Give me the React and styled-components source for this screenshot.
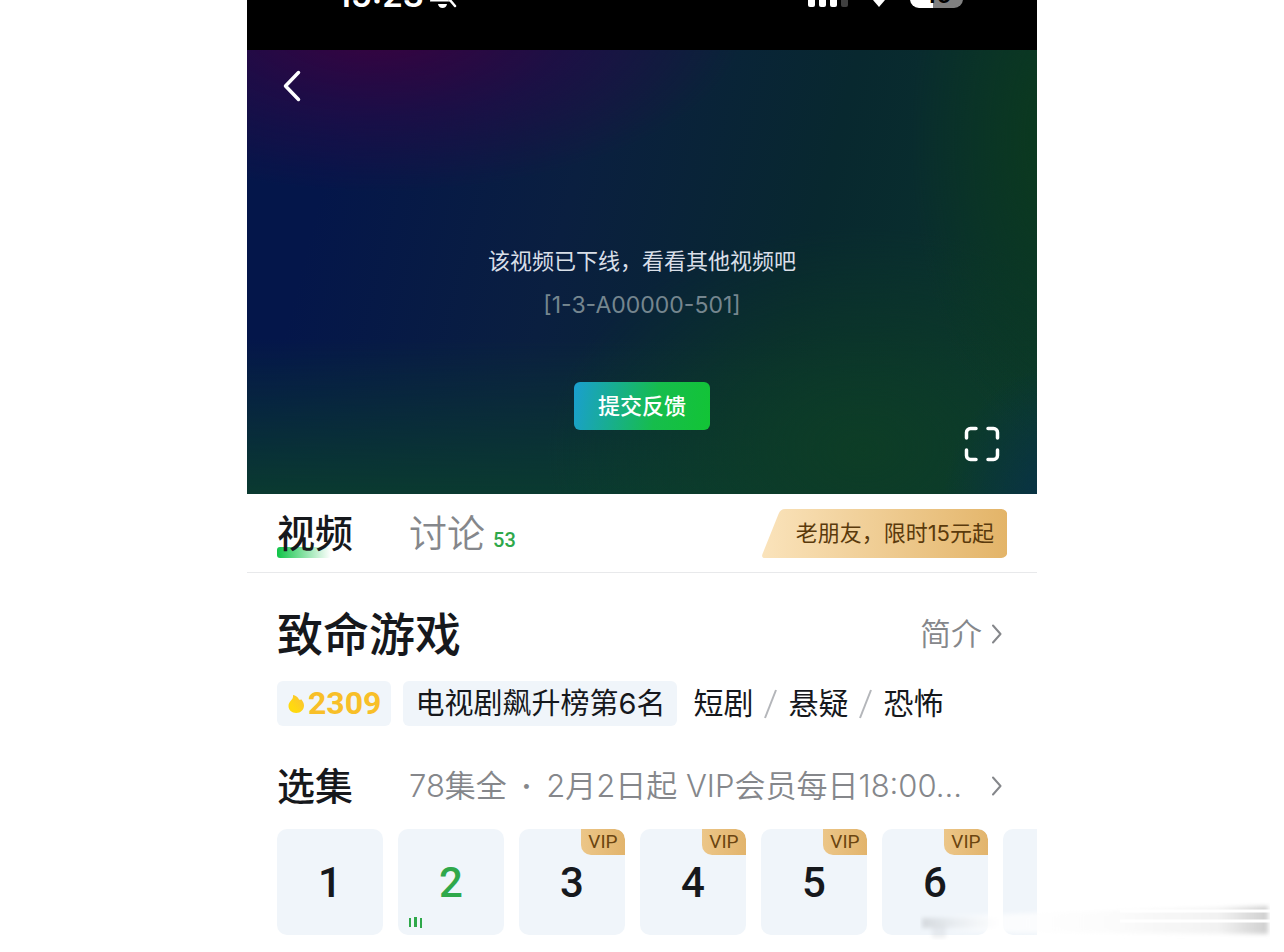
import { useState } from "react";
import styled, { createGlobalStyle } from "styled-components";

const GlobalStyle = createGlobalStyle`
    * {
        box-sizing: border-box;
    }

    body {
        margin: 0;
        background-color: #ffffff;
        font-family: Inter, "Noto Sans CJK SC", sans-serif;
        color: #16181c;
    }

    button {
        padding: 0;
        border: none;
        background: none;
        font-family: inherit;
        color: inherit;
        cursor: pointer;
    }

    svg {
        display: block;
        flex-shrink: 0;
    }
`;

const Container = styled.div`
    position: relative;
    overflow: hidden;
    min-height: 100vh;
`;

const Phone = styled.main`
    width: 100%;
    max-width: 790px;
    margin: 0 auto;
    overflow: hidden;
`;

/* 状态栏 */
const StatusBar = styled.div`
    display: flex;
    justify-content: space-between;
    align-items: flex-end;
    height: 50px;
    padding: 0 74px 42px 90px;
    overflow: hidden;
    background-color: #000000;
    color: #ffffff;
`;

const StatusGroup = styled.div`
    display: flex;
    align-items: flex-end;
    gap: ${(props) => props.$gap}px;
    height: 32px;
    flex-shrink: 0;
`;

const Time = styled.span`
    font-size: 33px;
    line-height: 26px;
    font-weight: 600;
`;

const Battery = styled.span`
    width: 53px;
    height: 26px;
    border-radius: 9px;
    background: linear-gradient(90deg, #ffffff 44%, #808080 44%);
    color: #000000;
    font-size: 22px;
    line-height: 26px;
    font-weight: 700;
    text-align: center;
`;

/* 播放器 */
const Player = styled.section`
    position: relative;
    display: flex;
    flex-direction: column;
    align-items: center;
    aspect-ratio: 16 / 9;
    padding-top: 194px;
    background:
        radial-gradient(ellipse 46% 38% at 17% -6%, rgba(62, 0, 62, 0.95), rgba(40, 8, 70, 0.6) 55%, transparent),
        radial-gradient(ellipse 16% 34% at 104% 104%, #08304c, transparent),
        radial-gradient(ellipse 20% 70% at 104% 20%, #0b3a1c, transparent),
        radial-gradient(ellipse 40% 50% at 78% 90%, #0d3d26, transparent),
        linear-gradient(0deg, #0a3a30, transparent 35%),
        linear-gradient(104deg, #04164a 12%, #0a1f40 40%, #08282f 68%, #0a362c 100%);
`;

const BackButton = styled.button`
    position: absolute;
    top: 19px;
    left: 35px;
`;

const FullscreenButton = styled.button`
    position: absolute;
    right: 37px;
    bottom: 32px;
`;

const Notice = styled.p`
    margin: 0;
    color: #d9dfe8;
    font-size: 22px;
    line-height: 34px;
`;

const ErrorCode = styled.p`
    margin: 12px 0 0;
    color: #75868f;
    font-size: 23px;
    line-height: 30px;
`;

const FeedbackButton = styled.button`
    height: 48px;
    margin-top: 62px;
    padding: 0 24px;
    border-radius: 6px;
    background: linear-gradient(100deg, #1a9fd0, #16bd4c 60%, #12c435);
    && {
        color: #ffffff;
    }
    font-size: 22px;
    line-height: 48px;
    font-weight: 500;
`;

/* 标签栏 */
const TabBar = styled.nav`
    display: flex;
    align-items: center;
    height: 79px;
    padding: 0 30px;
    border-bottom: 1px solid #e8e9eb;
`;

const Tab = styled.button`
    position: relative;
    z-index: 0;
    display: flex;
    align-items: baseline;
    gap: 8px;
    margin-right: 56px;
    && {
        color: ${(props) => (props.$active ? "#16181c" : "#85878b")};
    }
    font-size: 38px;
    line-height: 50px;
    font-weight: ${(props) => (props.$active ? 500 : 350)};

    &::before {
        content: "";
        display: ${(props) => (props.$active ? "block" : "none")};
        position: absolute;
        z-index: -1;
        left: 0;
        bottom: 0;
        width: 54px;
        height: 11px;
        border-radius: 3px;
        background: linear-gradient(90deg, #10c448, rgba(16, 196, 72, 0));
    }
`;

const Count = styled.span`
    color: #2fa84a;
    font-family: Roboto, sans-serif;
    font-size: 20px;
    line-height: 20px;
    font-weight: 500;
`;

const PromoButton = styled.button`
    position: relative;
    z-index: 0;
    height: 49px;
    margin-left: auto;
    padding: 0 13px 0 34px;
    && {
        color: #5a3a0c;
    }
    font-size: 22px;
    line-height: 49px;

    svg {
        position: absolute;
        z-index: -1;
        inset: 0;
        width: 100%;
        height: 100%;
    }
`;

/* 剧集信息 */
const Detail = styled.section`
    padding: 31px 0 17px 30px;
`;

const Row = styled.div`
    display: flex;
    align-items: center;
    padding-right: 35px;
`;

const Title = styled.h1`
    margin: 0;
    font-size: 46px;
    line-height: 60px;
    font-weight: 500;
`;

const MoreButton = styled.button`
    display: flex;
    align-items: center;
    gap: 10px;
    margin-left: auto;
    && {
        color: #85878b;
    }
    font-size: 31px;
    line-height: 44px;
    font-weight: 350;
`;

const Tags = styled.div`
    display: flex;
    align-items: center;
    gap: 12px;
    margin-top: 17px;
`;

const Chip = styled.span`
    display: flex;
    align-items: center;
    gap: 3px;
    height: 45px;
    padding: 0 ${(props) => (props.$hot ? 10 : 12)}px;
    border-radius: 6px;
    background-color: #f0f5fa;
    font-size: 29px;
    line-height: 45px;
`;

const Heat = styled.strong`
    color: #f8bf28;
    font-family: Roboto, sans-serif;
    font-size: 32px;
    font-weight: 700;
`;

const Genres = styled.span`
    display: flex;
    align-items: center;
    gap: 11px;
    margin-left: 4px;
    font-size: 30px;
    line-height: 45px;
`;

const EpisodeHead = styled.div`
    display: flex;
    align-items: center;
    gap: 56px;
    margin-top: 35px;
    padding-right: 35px;
`;

const SubTitle = styled.h2`
    flex-shrink: 0;
    margin: 0;
    font-size: 38px;
    line-height: 50px;
    font-weight: 500;
`;

const ScheduleButton = styled.button`
    display: flex;
    flex: 1;
    justify-content: space-between;
    align-items: center;
    min-width: 0;
    && {
        color: #85878b;
    }
    font-size: 31px;
    line-height: 44px;
    font-weight: 350;
    white-space: nowrap;
`;

const Dot = styled.b`
    margin: 0 6px;
    font-weight: 600;
`;

const EpisodeList = styled.div`
    display: flex;
    gap: 15px;
    margin-top: 18px;
    overflow: hidden;
`;

const Episode = styled.button`
    position: relative;
    flex-shrink: 0;
    width: 106px;
    height: 106px;
    border-radius: 10px;
    overflow: hidden;
    && {
        background-color: #f0f5fa;
        color: ${(props) => (props.$active ? "#2fa84a" : "#16181c")};
        font-family: Roboto, sans-serif;
    }
    font-size: 42px;
    font-weight: 500;
`;

const Vip = styled.span`
    position: absolute;
    top: 0;
    right: 0;
    width: 44px;
    height: 26px;
    border-radius: 0 10px 0 10px;
    background: linear-gradient(90deg, #ecc688, #e2b46c);
    color: #6b4510;
    font-size: 19px;
    line-height: 26px;
    font-weight: 400;
`;

const Playing = styled.span`
    position: absolute;
    left: 10px;
    bottom: 7px;
`;

/* 右下角的淡水印 */
const Smear = styled.div`
    position: absolute;
    right: 14px;
    bottom: 12px;
    width: 350px;
    height: 38px;
    pointer-events: none;
`;

const BellOff = () => (
    <svg width="30" height="30" viewBox="0 0 30 30">
        <path
            d="M14 1c-5 0-8 4-8 9v5c0 3-4 5-4 8.500h25c0-3.500-4-5.500-4-8.500v-5c0-5-4-9-9-9z"
            fill="#fff"
        />
        <path d="M10 26h9c-.5 2.800-2 4-4.500 4s-4-1.200-4.500-4z" fill="#fff" />
        <path d="M6 2l24 26" stroke="#000" strokeWidth="6" />
        <path d="M5 2l22 26" stroke="#fff" strokeWidth="2.500" strokeLinecap="round" />
    </svg>
);

const Signal = () => (
    <svg width="40" height="25" viewBox="0 0 40 25">
        <rect x="0" y="14" width="7" height="10" rx="2" fill="#fff" />
        <rect x="11" y="9" width="7" height="15" rx="2" fill="#fff" />
        <rect x="22" y="5" width="7" height="19" rx="2" fill="#fff" />
        <rect x="33" y="0" width="7" height="24" rx="2" fill="#404040" />
    </svg>
);

const Wifi = () => (
    <svg width="34" height="26" viewBox="0 0 34 26" fill="none">
        <path d="M2 8c9-8 21-8 30 0M7.500 13c6-5 13-5 19 0" stroke="#fff" strokeWidth="4" />
        <path d="M17 25l-6-7c3.500-3 8.500-3 12 0z" fill="#fff" />
    </svg>
);

const Arrow = () => (
    <svg width="10" height="20" viewBox="0 0 10 20" fill="none">
        <path
            d="M1 1.500L8.500 10 1 18.500"
            stroke="#85878b"
            strokeWidth="2"
            strokeLinecap="round"
            strokeLinejoin="round"
        />
    </svg>
);

const Slash = () => (
    <svg width="13" height="30" viewBox="0 0 13 30" fill="none">
        <path d="M12 1L1 29" stroke="#b4b6ba" strokeWidth="2" />
    </svg>
);

const Flame = () => (
    <svg width="18" height="22" viewBox="0 0 18 22">
        <defs>
            <linearGradient id="flame" x1="0" y1="1" x2="1" y2="0">
                <stop offset="0.3" stopColor="#ffd90f" />
                <stop offset="1" stopColor="#f9bf3a" />
            </linearGradient>
        </defs>
        <path
            d="M6 2c2.500.5 5 2 6 4.500.8.500 1.500.2 2.200-.3C15.800 8 17 10 17 12.500c0 4.200-3.300 7.500-7.800 7.500S1.500 17 1.500 13c0-2.500 1-4 2.500-5.500C5.500 6 6.300 4.500 6 2z"
            fill="url(#flame)"
        />
    </svg>
);

const EPISODES = [1, 2, 3, 4, 5, 6, 7];
const GENRES = ["短剧", "悬疑", "恐怖"];

const App = () => {
    const [tab, setTab] = useState("video");
    const [current, setCurrent] = useState(2);

    return (
        <Container>
            <GlobalStyle />
            <Phone>
                <StatusBar>
                    <StatusGroup $gap={4}>
                        <Time>15:23</Time>
                        <BellOff />
                    </StatusGroup>
                    <StatusGroup $gap={14}>
                        <Signal />
                        <Wifi />
                        <Battery>46</Battery>
                    </StatusGroup>
                </StatusBar>

                <Player>
                    <BackButton aria-label="返回">
                        <svg width="20" height="34" viewBox="0 0 20 34" fill="none">
                            <path
                                d="M16.500 3.500L3.500 17l13 13.500"
                                stroke="#fff"
                                strokeWidth="3.500"
                                strokeLinecap="round"
                                strokeLinejoin="round"
                            />
                        </svg>
                    </BackButton>
                    <Notice>该视频已下线，看看其他视频吧</Notice>
                    <ErrorCode>[1-3-A00000-501]</ErrorCode>
                    <FeedbackButton>提交反馈</FeedbackButton>
                    <FullscreenButton aria-label="全屏">
                        <svg width="36" height="36" viewBox="0 0 36 36" fill="none">
                            <path
                                d="M2.500 12V6.500a4 4 0 0 1 4-4H12M24 2.500h5.500a4 4 0 0 1 4 4V12M33.500 24v5.500a4 4 0 0 1-4 4H24M12 33.500H6.500a4 4 0 0 1-4-4V24"
                                stroke="#fff"
                                strokeWidth="3.500"
                                strokeLinecap="round"
                            />
                        </svg>
                    </FullscreenButton>
                </Player>

                <TabBar>
                    <Tab $active={tab === "video"} onClick={() => setTab("video")}>
                        视频
                    </Tab>
                    <Tab $active={tab === "talk"} onClick={() => setTab("talk")}>
                        讨论
                        <Count>53</Count>
                    </Tab>
                    <PromoButton>
                        <svg viewBox="0 0 245 49" preserveAspectRatio="none" aria-hidden="true">
                            <defs>
                                <linearGradient id="gold" x1="0" y1="0" x2="1" y2="0">
                                    <stop offset="0" stopColor="#fae3bb" />
                                    <stop offset="1" stopColor="#e3b468" />
                                </linearGradient>
                            </defs>
                            <path
                                d="M23 0H239a6 6 0 0 1 6 6V43a6 6 0 0 1-6 6H3q-4 0-2.500-4L16.500 5q2-5 6.500-5z"
                                fill="url(#gold)"
                            />
                        </svg>
                        老朋友，限时15元起
                    </PromoButton>
                </TabBar>

                <Detail>
                    <Row>
                        <Title>致命游戏</Title>
                        <MoreButton>
                            简介
                            <Arrow />
                        </MoreButton>
                    </Row>

                    <Tags>
                        <Chip $hot>
                            <Flame />
                            <Heat>2309</Heat>
                        </Chip>
                        <Chip>电视剧飙升榜第6名</Chip>
                        <Genres>
                            {GENRES.map((genre, i) => [
                                i > 0 && <Slash key={`slash-${genre}`} />,
                                <span key={genre}>{genre}</span>,
                            ])}
                        </Genres>
                    </Tags>

                    <EpisodeHead>
                        <SubTitle>选集</SubTitle>
                        <ScheduleButton>
                            <span>
                                78集全 <Dot>·</Dot> 2月2日起 VIP会员每日18:00…
                            </span>
                            <Arrow />
                        </ScheduleButton>
                    </EpisodeHead>

                    <EpisodeList>
                        {EPISODES.map((no) => (
                            <Episode key={no} $active={no === current} onClick={() => setCurrent(no)}>
                                {no < 7 && no}
                                {no > 2 && no < 7 && <Vip>VIP</Vip>}
                                {no === current && (
                                    <Playing>
                                        <svg width="15" height="11" viewBox="0 0 15 11" fill="#2fa84a">
                                            <rect x="1" y="1" width="2" height="9" />
                                            <rect x="6" y="0" width="3" height="10" />
                                            <rect x="12" y="1" width="2" height="10" />
                                        </svg>
                                    </Playing>
                                )}
                            </Episode>
                        ))}
                    </EpisodeList>
                </Detail>
            </Phone>

            <Smear aria-hidden="true">
                <svg width="350" height="38" viewBox="0 0 350 38">
                    <defs>
                        <linearGradient id="fade" x1="0" y1="0" x2="1" y2="0">
                            <stop offset="0" stopColor="#fff" stopOpacity="0" />
                            <stop offset="0.15" stopColor="#fff" stopOpacity="0.7" />
                            <stop offset="0.5" stopColor="#fcfcfc" />
                            <stop offset="0.85" stopColor="#f2f2f2" />
                            <stop offset="1" stopColor="#cfcfcf" />
                        </linearGradient>
                        <linearGradient id="spot" x1="0" y1="0" x2="1" y2="0">
                            <stop offset="0" stopColor="#c8ccd0" stopOpacity="0.7" />
                            <stop offset="0.4" stopColor="#dde1e5" stopOpacity="0.5" />
                            <stop offset="1" stopColor="#eef0f2" stopOpacity="0" />
                        </linearGradient>
                        <filter id="soft" x="-10%" y="-30%" width="120%" height="160%">
                            <feGaussianBlur stdDeviation="2" />
                        </filter>
                    </defs>
                    <g filter="url(#soft)">
                        <path d="M20 14L348 4v28L20 30z" fill="url(#fade)" />
                        <rect x="2" y="16" width="80" height="10" fill="url(#spot)" />
                        <rect x="12" y="24" width="14" height="12" fill="#d5d8db" opacity="0.4" />
                    </g>
                    <path d="M200 9H350M200 19H350" stroke="#fff" strokeWidth="3" />
                </svg>
            </Smear>
        </Container>
    );
};

export default App;
